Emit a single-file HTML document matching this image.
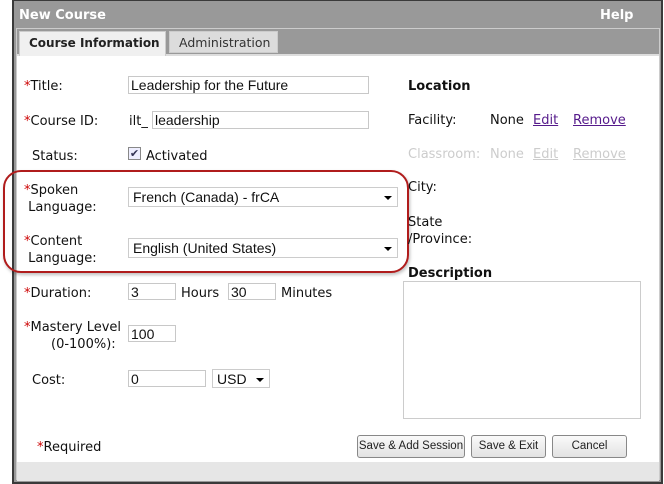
<!DOCTYPE html>
<html><head><meta charset="utf-8"><style>
*{margin:0;padding:0;box-sizing:border-box}
body{width:664px;height:484px;background:#fff;position:relative;overflow:hidden;font-family:"DejaVu Sans","Liberation Sans",sans-serif;font-size:13px;color:#111}
.a{position:absolute;white-space:nowrap}
.l{line-height:17px;padding-top:1px}
.r{color:#c00}
.in{position:absolute;border:1px solid #c8c8c8;background:#fff;font-family:"Liberation Sans",sans-serif;font-size:14px;padding-left:2px;line-height:16px;white-space:nowrap}
.sel{position:absolute;border:1px solid #ccc;background:#fff;font-family:"Liberation Sans",sans-serif;font-size:14px;padding-left:4px;line-height:18px;white-space:nowrap}
.sel:after{content:"";position:absolute;right:5px;top:8px;border-left:4px solid transparent;border-right:4px solid transparent;border-top:4px solid #000}
.btn{position:absolute;border:1px solid #888;border-radius:3px;background:linear-gradient(#fafafa,#e2e2e2);font-family:"Liberation Sans",sans-serif;font-size:11.5px;text-align:center;line-height:21px;color:#222;white-space:nowrap}
a{color:#551a8b;text-decoration:underline}
.g{color:#ccc}
</style></head><body>
<div class="a" style="left:12px;top:0;width:651px;height:484px;background:#3a3a3a"></div>
<div class="a" style="left:14px;top:1px;width:647px;height:481px;background:#999"></div>
<div class="a" style="left:19px;top:8px;color:#fff;font-weight:bold;font-size:13px">New Course</div>
<div class="a" style="left:600px;top:8px;color:#fff;font-weight:bold;font-size:13px">Help</div>
<div class="a" style="left:16px;top:28px;width:644px;height:452px;border:1px solid #ccc;border-bottom:none"></div>
<div class="a" style="left:17px;top:462px;width:642px;height:19px;background:#e6e6e6"></div>
<div class="a" style="left:17px;top:54px;width:642px;height:408px;background:#fff;border-top:2px solid #ddd"></div>
<div class="a" style="left:19px;top:31px;width:147px;height:25px;background:#f0f0f0;border:1px solid #ccc;border-bottom:none;font-weight:bold;font-size:12px;padding:4px 0 0 9px;color:#222">Course Information</div>
<div class="a" style="left:169px;top:31px;width:109px;height:22px;background:#dcdcdc;border:1px solid #ccc;font-size:12.5px;padding:3px 0 0 9px;color:#333">Administration</div>

<div class="a l" style="left:24px;top:77px"><span class="r">*</span>Title:</div>
<div class="in" style="left:128px;top:76px;width:241px;height:18px">Leadership for the Future</div>
<div class="a l" style="left:24px;top:112px"><span class="r">*</span>Course ID:</div>
<div class="a l" style="left:129px;top:112px">ilt_</div>
<div class="in" style="left:152px;top:111px;width:217px;height:18px">leadership</div>
<div class="a l" style="left:32px;top:147px">Status:</div>
<div class="a" style="left:128px;top:147px;width:13px;height:13px;border:1px solid #888;background:#eef;font-size:11px;line-height:11px;text-align:center;color:#335">✔</div>
<div class="a l" style="left:146px;top:147px">Activated</div>

<div class="a" style="left:3px;top:170px;width:406px;height:103px;border:2px solid #b01c1c;border-radius:18px;box-shadow:1px 2px 3px rgba(0,0,0,.25)"></div>
<div class="a l" style="left:24px;top:181px"><span class="r">*</span>Spoken<br>&nbsp;Language:</div>
<div class="sel" style="left:128px;top:187px;width:270px;height:20px">French (Canada) - frCA</div>
<div class="a l" style="left:24px;top:232px"><span class="r">*</span>Content<br>&nbsp;Language:</div>
<div class="sel" style="left:128px;top:238px;width:270px;height:20px">English (United States)</div>

<div class="a l" style="left:24px;top:284px"><span class="r">*</span>Duration:</div>
<div class="in" style="left:128px;top:283px;width:48px;height:17px">3</div>
<div class="a l" style="left:181px;top:284px">Hours</div>
<div class="in" style="left:228px;top:283px;width:48px;height:17px">30</div>
<div class="a l" style="left:281px;top:284px">Minutes</div>
<div class="a l" style="left:24px;top:318px"><span class="r">*</span>Mastery Level</div>
<div class="a l" style="left:51px;top:335px">(0-100%):</div>
<div class="in" style="left:128px;top:325px;width:48px;height:17px">100</div>
<div class="a l" style="left:32px;top:371px">Cost:</div>
<div class="in" style="left:128px;top:370px;width:78px;height:17px">0</div>
<div class="sel" style="left:212px;top:369px;width:58px;height:19px">USD</div>

<div class="a l" style="left:37px;top:438px"><span class="r">*</span>Required</div>
<div class="btn" style="left:357px;top:435px;width:108px;height:23px">Save &amp; Add Session</div>
<div class="btn" style="left:471px;top:435px;width:75px;height:23px">Save &amp; Exit</div>
<div class="btn" style="left:552px;top:435px;width:75px;height:23px">Cancel</div>

<div class="a l" style="left:408px;top:77px;font-weight:bold">Location</div>
<div class="a l" style="left:408px;top:111px">Facility:</div>
<div class="a l" style="left:490px;top:111px">None</div>
<div class="a l" style="left:533px;top:111px"><a>Edit</a></div>
<div class="a l" style="left:573px;top:111px"><a>Remove</a></div>
<div class="a l g" style="left:408px;top:145px">Classroom:</div>
<div class="a l g" style="left:490px;top:145px">None</div>
<div class="a l g" style="left:533px;top:145px;text-decoration:underline">Edit</div>
<div class="a l g" style="left:573px;top:145px;text-decoration:underline">Remove</div>
<div class="a l" style="left:408px;top:178px">City:</div>
<div class="a l" style="left:408px;top:213px">State<br>/Province:</div>
<div class="a l" style="left:408px;top:264px;font-weight:bold">Description</div>
<div class="a" style="left:403px;top:281px;width:238px;height:138px;border:1px solid #ccc"></div>
</body></html>
